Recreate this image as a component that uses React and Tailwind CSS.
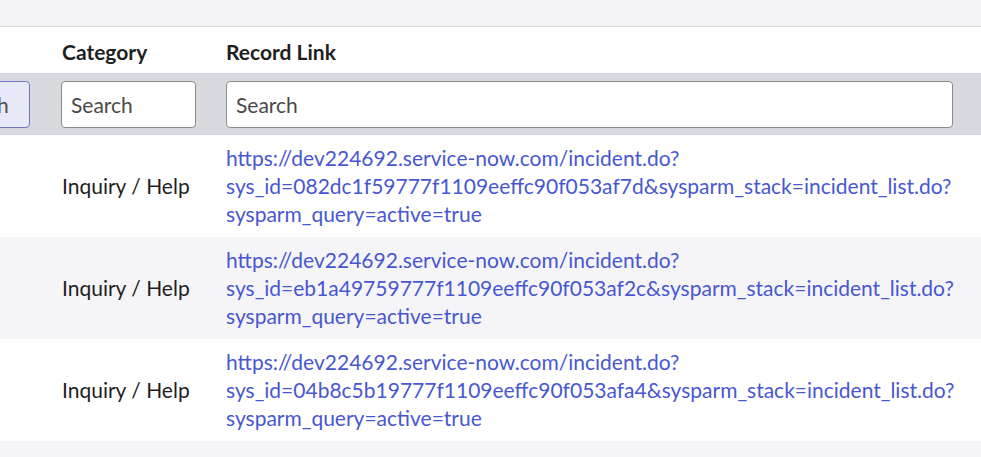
const rows = [
  { cat: "Inquiry / Help", id: "082dc1f59777f1109eeffc90f053af7d" },
  { cat: "Inquiry / Help", id: "eb1a49759777f1109eeffc90f053af2c" },
  { cat: "Inquiry / Help", id: "04b8c5b19777f1109eeffc90f053afa4" },
];

function SearchBox({ wide, active }) {
  return (
    <input
      placeholder="Search"
      className={
        "h-[47px] rounded-[4px] border px-[9px] text-[21px] outline-none placeholder:text-[#4a4a4a] " +
        (active ? "border-[#6f74c4] bg-[#e7e9f8] " : "border-[#8c8c8c] bg-white ") +
        (wide ? "w-full" : "w-[135px]")
      }
    />
  );
}

export default function App() {
  return (
    <div
      className="h-[457px] w-[981px] overflow-hidden bg-white text-[#1f1f1f]"
      style={{ fontFamily: "Lato, 'Noto Sans', sans-serif" }}
    >
      <div className="h-[27px] border-b border-[#d6d6da] bg-[#f4f4f6]" />
      <div className="ml-[-79px] w-[1060px]">
        <div className="flex h-[46px] items-center pt-[4px] text-[21px] font-bold">
          <div className="w-[125px]" />
          <div className="w-[165px] pl-[16px]">Category</div>
          <div className="flex-1 pl-[15px]">Record Link</div>
        </div>
        <div className="flex h-[62px] items-start bg-[#d9dae0] pt-[8px]">
          <div className="w-[125px] pl-[16px] pr-[16px]">
            <SearchBox wide active />
          </div>
          <div className="w-[165px] pl-[15px]">
            <SearchBox />
          </div>
          <div className="w-[758px] pl-[15px] pr-[16px]">
            <SearchBox wide />
          </div>
        </div>
        {rows.map((r, i) => (
          <div
            key={r.id}
            className={
              "flex h-[102px] items-center text-[21px] " +
              (i % 2 === 1 ? "bg-[#f5f5f7]" : "bg-white")
            }
          >
            <div className="w-[125px]" />
            <div className="w-[165px] pl-[16px]">{r.cat}</div>
            <a
              href="#"
              className="flex-1 pl-[15px] leading-[28px] text-[#4857d1]"
            >
              <span className="block">https://dev224692.service-now.com/incident.do?</span>
              <span className="block">
                sys_id={r.id}&amp;sysparm_stack=incident_list.do?
              </span>
              <span className="block">sysparm_query=active=true</span>
            </a>
          </div>
        ))}
        <div className="h-[20px] bg-[#f5f5f7]" />
      </div>
    </div>
  );
}
